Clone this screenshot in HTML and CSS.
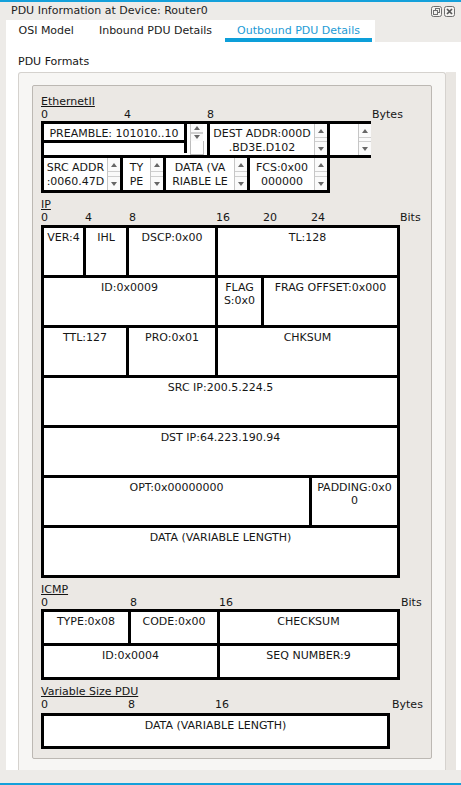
FILE: index.html
```
<!DOCTYPE html>
<html>
<head>
<meta charset="utf-8">
<title>PDU Information</title>
<link rel="stylesheet" href="styles.css">
</head>
<body>
<div class="win">
  <div class="accent"></div>
  <div class="titlebar">
    <span class="title">PDU Information at Device: Router0</span>
    <div class="winbtns">
      <svg class="wbtn" width="11" height="11" viewBox="0 0 11 11">
        <rect x="0.5" y="0.5" width="10" height="10" rx="2" fill="#f3f2f0" stroke="#6f6f6f"/>
        <rect x="4.5" y="2.5" width="4" height="4" fill="none" stroke="#6f6f6f"/>
        <rect x="2.5" y="4.5" width="4" height="4" fill="#f3f2f0" stroke="#6f6f6f"/>
      </svg>
      <svg class="wbtn" width="11" height="11" viewBox="0 0 11 11">
        <rect x="0.5" y="0.5" width="10" height="10" rx="2" fill="#f3f2f0" stroke="#6f6f6f"/>
        <path d="M3 3 L8 8 M8 3 L3 8" stroke="#555" stroke-width="1.7"/>
      </svg>
    </div>
  </div>
  <div class="tabbar">
    <div class="tab">OSI Model</div>
    <div class="tab">Inbound PDU Details</div>
    <div class="tab active">Outbound PDU Details</div>
  </div>
  <div class="panel">
    <div class="panel-label">PDU Formats</div>
    <div class="scrollrow">
      <div class="scrollbox">
        <div class="inner">

          <section class="fmt">
            <div class="fmt-name">EthernetII</div>
            <div class="ruler ruler-eth"><span>0</span><span>4</span><span>8</span><span>Bytes</span></div>
            <div class="eth-row eth-row1">
              <div class="ecell e-pre">
                <div class="pre-main"><div class="pre-text">PREAMBLE: 101010..10</div></div>
                <div class="pre-div"></div>
                <div class="pre-side">
                  <div class="sb sb-short"><div class="sb-btn up"></div><div class="sb-btn dn"></div></div>
                  <div class="pre-box"></div>
                </div>
              </div>
              <div class="ecell e-dest">
                <div class="txt">DEST ADDR:000D<br>.BD3E.D102</div>
                <div class="sb"><div class="sb-btn up"></div><div class="sb-btn dn"></div></div>
              </div>
              <div class="ecell e-blank">
                <div class="txt"></div>
                <div class="sb"><div class="sb-btn up"></div><div class="sb-btn dn"></div></div>
              </div>
            </div>
            <div class="eth-row eth-row2">
              <div class="ecell e-src">
                <div class="txt">SRC ADDR<br>:0060.47D</div>
                <div class="sb"><div class="sb-btn up"></div><div class="sb-btn dn"></div></div>
              </div>
              <div class="ecell e-type">
                <div class="txt">TY<br>PE</div>
                <div class="sb"><div class="sb-btn up"></div><div class="sb-btn dn"></div></div>
              </div>
              <div class="ecell e-data">
                <div class="txt">DATA (VA<br>RIABLE LE</div>
                <div class="sb"><div class="sb-btn up"></div><div class="sb-btn dn"></div></div>
              </div>
              <div class="ecell e-fcs">
                <div class="txt">FCS:0x00<br>000000</div>
                <div class="sb"><div class="sb-btn up"></div><div class="sb-btn dn"></div></div>
              </div>
            </div>
          </section>

          <section class="fmt fmt-gap">
            <div class="fmt-name">IP</div>
            <div class="ruler ruler-ip"><span>0</span><span>4</span><span>8</span><span>16</span><span>20</span><span>24</span><span>Bits</span></div>
            <div class="ipgrid">
              <div class="c">VER:4</div>
              <div class="c">IHL</div>
              <div class="c">DSCP:0x00</div>
              <div class="c s3">TL:128</div>

              <div class="c s3">ID:0x0009</div>
              <div class="c">FLAG<br>S:0x0</div>
              <div class="c s2">FRAG OFFSET:0x000</div>

              <div class="c s2">TTL:127</div>
              <div class="c">PRO:0x01</div>
              <div class="c s3">CHKSUM</div>

              <div class="c sall">SRC IP:200.5.224.5</div>

              <div class="c sall">DST IP:64.223.190.94</div>

              <div class="c s5">OPT:0x00000000</div>
              <div class="c">PADDING:0x0<br>0</div>

              <div class="c sall">DATA (VARIABLE LENGTH)</div>
            </div>
          </section>

          <section class="fmt fmt-gap">
            <div class="fmt-name">ICMP</div>
            <div class="ruler ruler-icmp"><span>0</span><span>8</span><span>16</span><span>Bits</span></div>
            <div class="icmpgrid">
              <div class="c">TYPE:0x08</div>
              <div class="c">CODE:0x00</div>
              <div class="c">CHECKSUM</div>
              <div class="c s2">ID:0x0004</div>
              <div class="c">SEQ NUMBER:9</div>
            </div>
          </section>

          <section class="fmt fmt-gap">
            <div class="fmt-name">Variable Size PDU</div>
            <div class="ruler ruler-vs"><span>0</span><span>8</span><span>16</span><span>Bytes</span></div>
            <div class="vsbox">DATA (VARIABLE LENGTH)</div>
          </section>

        </div>
      </div>
      <div class="vtrack"></div>
    </div>
  </div>
  <div class="accent bottom"></div>
</div>
</body>
</html>
```
FILE: styles.css
```
html, body {
  margin: 0;
  padding: 0;
}
body {
  background: #edebe8;
  font-family: "DejaVu Sans", "Liberation Sans", sans-serif;
  font-size: 11px;
  color: #161616;
}
.win {
  width: 461px;
  height: 785px;
  display: flex;
  flex-direction: column;
  background: #edebe8;
  overflow: hidden;
}
.accent {
  height: 2px;
  flex: none;
  background: #14a0da;
}
.accent.bottom {
  margin-top: auto;
}
.titlebar {
  height: 18px;
  flex: none;
  display: flex;
  align-items: center;
  justify-content: space-between;
  padding: 0 6px 0 11px;
}
.title {
  line-height: 18px;
  color: #1e1e1e;
}
.winbtns {
  display: flex;
  gap: 2px;
}
.wbtn {
  display: block;
}
.tabbar {
  margin-left: 6px;
  width: 369px;
  height: 22px;
  flex: none;
  background: #fff;
  display: flex;
}
.tab {
  padding: 4px 12.5px 0;
  line-height: 14px;
  border-bottom: 4px solid transparent;
  white-space: nowrap;
  color: #1b1b1b;
}
.tab.active {
  color: #1c9bd6;
  border-bottom-color: #0d9fd9;
}
.panel {
  margin-left: 6px;
  width: 455px;
  height: 728px;
  flex: none;
  box-sizing: border-box;
  background: #fff;
  padding-top: 13px;
  display: flex;
  flex-direction: column;
}
.panel-label {
  padding-left: 12px;
  line-height: 13px;
}
.scrollrow {
  margin-top: 4px;
  height: 698px;
  display: flex;
}
.scrollbox {
  margin-left: 12px;
  width: 428px;
  box-sizing: border-box;
  border: 1px solid #d5d2ce;
  border-bottom: none;
  border-radius: 3px 3px 0 0;
  background: #f7f6f4;
  padding: 12px 0 0 13px;
  overflow: hidden;
}
.vtrack {
  width: 10px;
  background: #e9e6e2;
}
.inner {
  width: 400px;
  box-sizing: border-box;
  border: 1px solid #bcb8b3;
  border-radius: 2px;
  background: #ebe8e4;
  padding: 9px 0 9px 8px;
}
.fmt-gap {
  margin-top: 5px;
}
.fmt-name {
  line-height: 13px;
  text-decoration: underline;
}
.ruler {
  display: grid;
  line-height: 13px;
}
.ruler-eth { grid-template-columns: 83px 83px 165px auto; }
.ruler-ip { grid-template-columns: 44px 44px 87px 47px 48px 89px auto; }
.ruler-icmp { grid-template-columns: 89px 89px 182px auto; }
.ruler-vs { grid-template-columns: 87px 87px 177px auto; }

/* Ethernet rows */
.eth-row {
  display: flex;
  gap: 3px;
  padding: 3px;
  background: #000;
  width: max-content;
}
.eth-row1 {
  padding-right: 0;
}
.eth-row2 {
  margin-top: -3px;
}
.ecell {
  display: flex;
  background: #fff;
  overflow: hidden;
}
.eth-row1 .ecell { height: 31px; }
.eth-row2 .ecell { height: 32px; }
.e-pre { width: 163px; }
.e-dest { width: 117px; }
.e-blank { width: 41px; }
.e-src { width: 76px; }
.e-type { width: 40px; }
.e-data { width: 81px; }
.e-fcs { width: 77px; }
.txt {
  flex: 1;
  min-width: 0;
  text-align: center;
  padding-top: 3px;
  line-height: 14px;
  white-space: nowrap;
  overflow: hidden;
}
.sb {
  width: 12px;
  flex: none;
  border-left: 1px solid #c6c6c6;
  background: #fafafa;
  display: flex;
  flex-direction: column;
  justify-content: space-between;
}
.sb-btn {
  height: 13px;
  display: flex;
  align-items: center;
  justify-content: center;
}
.sb-btn.up { border-bottom: 1px solid #cfcfcf; }
.sb-btn.dn { border-top: 1px solid #cfcfcf; }
.sb-btn.up::before {
  content: "";
  border-left: 3.5px solid transparent;
  border-right: 3.5px solid transparent;
  border-bottom: 4px solid #666;
}
.sb-btn.dn::before {
  content: "";
  border-left: 3.5px solid transparent;
  border-right: 3.5px solid transparent;
  border-top: 4px solid #666;
}
.pre-main {
  width: 140px;
  flex: none;
}
.pre-text {
  height: 19px;
  box-sizing: border-box;
  border-bottom: 3px solid #000;
  text-align: center;
  padding-top: 3px;
  line-height: 14px;
  white-space: nowrap;
}
.pre-div {
  width: 3px;
  height: 29px;
  flex: none;
  background: #000;
}
.pre-side {
  width: 20px;
  flex: none;
  display: flex;
  flex-direction: column;
}
.sb-short {
  margin-left: 3px;
  height: 17px;
  flex: none;
}
.sb-short .sb-btn {
  height: 8px;
}
.pre-box {
  flex: 1;
  margin: 0 3px 0 3px;
  border: 1px solid #bdbdbd;
  border-top: none;
  background: #fff;
}

/* IP / ICMP grids */
.ipgrid, .icmpgrid {
  display: grid;
  gap: 3px;
  padding: 3px;
  background: #000;
  width: max-content;
}
.ipgrid {
  margin-top: 1px;
  grid-template-columns: 39px 40px 86px 43px 45px 85px;
  grid-template-rows: repeat(7, 47px);
}
.icmpgrid {
  grid-template-columns: 84px 86px 177px;
  grid-template-rows: 31px 31px;
}
.c {
  background: #fff;
  text-align: center;
  padding-top: 3px;
  line-height: 13px;
  white-space: nowrap;
  overflow: hidden;
}
.s2 { grid-column: span 2; }
.s3 { grid-column: span 3; }
.s5 { grid-column: span 5; }
.sall { grid-column: 1 / -1; }
.vsbox {
  margin-top: 2px;
  width: 349px;
  height: 36px;
  box-sizing: border-box;
  border: 3px solid #000;
  background: #fff;
  text-align: center;
  padding-top: 3px;
  line-height: 13px;
}
```
